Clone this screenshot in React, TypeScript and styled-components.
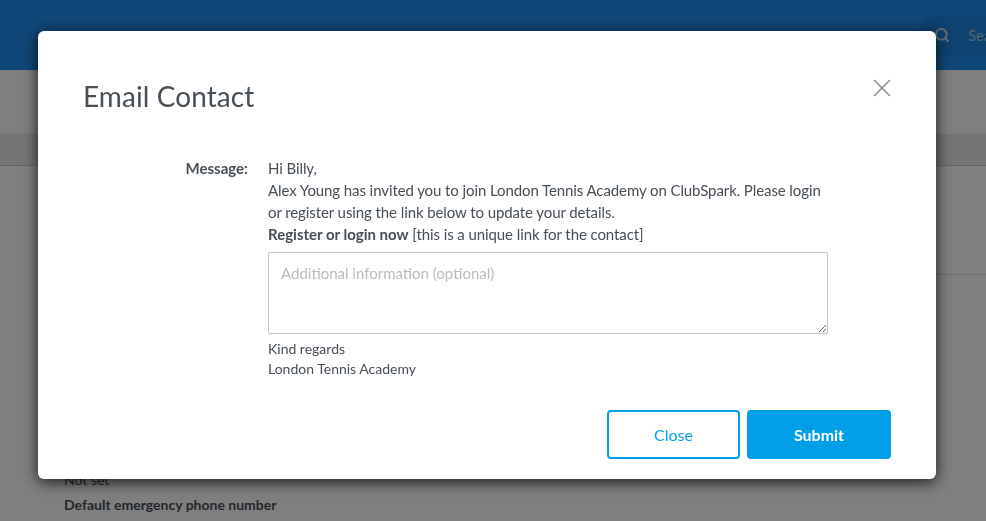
import React from "react";
import styled, { createGlobalStyle } from "styled-components";
import { Search, X } from "lucide-react";

const Global = createGlobalStyle`
  html, body { margin: 0; padding: 0; height: 100%; overflow: hidden; background: #fff; }
  body { font-family: Lato, "Liberation Sans", sans-serif; }
  * { box-sizing: border-box; }
`;

const Page = styled.div`
  height: 521px;
  overflow: hidden;
  display: flex;
  flex-direction: column;
`;

const Header = styled.header`
  height: 70px;
  flex: none;
  background: #1f8ff0;
  display: flex;
  justify-content: flex-end;
  padding: 15px 0 0;
`;

const SearchBox = styled.div`
  width: 68px;
  height: 40px;
  border-radius: 20px 0 0 20px;
  background: #1c84e0;
  display: flex;
  align-items: center;
  gap: 18px;
  padding-left: 16px;
  color: #a4c6e6;
  font-size: 15px;
  white-space: nowrap;
  overflow: hidden;
  svg { flex: none; color: #d0d6dc; }
`;

const SubNav = styled.div`
  height: 65px;
  flex: none;
  border-bottom: 1px solid #dfe4e9;
`;

const Band = styled.div`
  height: 31px;
  flex: none;
  background: #e6eaee;
  border-bottom: 1px solid #c4ccd4;
`;

const Section = styled.div`
  height: 109px;
  flex: none;
  margin-left: 64px;
  border-bottom: 1px solid #dcdcdc;
`;

const Details = styled.div`
  padding: 192px 0 0 64px;
  font-size: 14px;
  line-height: 25px;
  color: #474f57;
`;

const DetailLabel = styled.div`
  font-weight: 700;
`;

const Overlay = styled.div`
  position: fixed;
  inset: 0;
  background: rgba(0, 0, 0, 0.5);
  padding: 31px 0 0 38px;
`;

const Modal = styled.div`
  position: relative;
  width: 898px;
  height: 448px;
  background: #fff;
  border-radius: 6px;
  box-shadow: 0 3px 15px rgba(0, 0, 0, 0.8);
  padding: 45px 45px 20px;
  color: #474f57;
`;

const Title = styled.h2`
  margin: 0 0 41px;
  font-size: 28px;
  line-height: 40px;
  font-weight: 400;
  letter-spacing: 0.08px;
  color: #474f57;
`;

const CloseIcon = styled.button`
  position: absolute;
  top: 42px;
  right: 39px;
  width: 30px;
  height: 30px;
  padding: 0;
  border: 0;
  background: none;
  color: #808080;
  display: flex;
  align-items: center;
  justify-content: center;
`;

const Form = styled.div`
  display: grid;
  grid-template-columns: 165px 560px;
  column-gap: 20px;
  font-size: 15px;
  line-height: 22px;
`;

const Label = styled.div`
  font-weight: 700;
  text-align: right;
`;

const Copy = styled.div`
  min-width: 0;
  letter-spacing: -0.09px;
  strong { letter-spacing: 0; }
`;

const Notes = styled.textarea`
  display: block;
  width: 560px;
  height: 82px;
  margin: 7px 0 5px;
  padding: 9px 12px;
  border: 1px solid #c4c4c4;
  border-radius: 2px;
  font: 15px/22px Lato, "Liberation Sans", sans-serif;
  color: #474f57;
  outline: none;
  &::placeholder { color: #bdbdbd; opacity: 1; }
`;

const Signoff = styled.div`
  font-size: 14px;
  line-height: 20px;
  letter-spacing: 0;
`;

const Actions = styled.div`
  display: flex;
  justify-content: flex-end;
  gap: 7px;
  margin-top: 31px;
`;

const Button = styled.button<{ $primary?: boolean }>`
  height: 49px;
  width: ${(p) => (p.$primary ? "144px" : "133px")};
  border: 2px solid #009fe8;
  border-radius: 4px;
  background: ${(p) => (p.$primary ? "#009fe8" : "#fff")};
  color: ${(p) => (p.$primary ? "#fff" : "#009fe8")};
  font: ${(p) => (p.$primary ? 700 : 400)} 16px Lato, "Liberation Sans", sans-serif;
`;

export default function App() {
  return (
    <>
      <Global />
      <Page>
        <Header>
          <SearchBox>
            <Search size={16} strokeWidth={3} />
            <span>Search</span>
          </SearchBox>
        </Header>
        <SubNav />
        <Band />
        <Section />
        <Details>
          <div>Not set</div>
          <DetailLabel>Default emergency phone number</DetailLabel>
        </Details>
      </Page>
      <Overlay>
        <Modal>
          <Title>Email Contact</Title>
          <CloseIcon aria-label="Close">
            <X size={30} strokeWidth={1.05} />
          </CloseIcon>
          <Form>
            <Label>Message:</Label>
            <Copy>
              Hi Billy,
              <br />
              Alex Young has invited you to join London Tennis Academy on ClubSpark. Please login
              <br />
              or register using the link below to update your details.
              <br />
              <strong>Register or login now</strong> [this is a unique link for the contact]
              <Notes placeholder="Additional information (optional)" />
              <Signoff>
                Kind regards
                <br />
                London Tennis Academy
              </Signoff>
            </Copy>
          </Form>
          <Actions>
            <Button>Close</Button>
            <Button $primary>Submit</Button>
          </Actions>
        </Modal>
      </Overlay>
    </>
  );
}
